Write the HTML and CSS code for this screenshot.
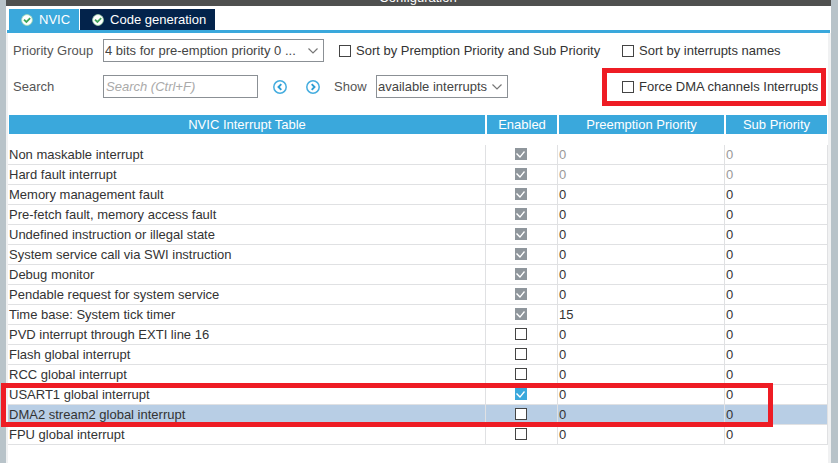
FILE: index.html
```
<!DOCTYPE html>
<html lang="en">
<head>
<meta charset="utf-8">
<title>NVIC Configuration</title>
<link rel="stylesheet" href="styles.css">
</head>
<body>
<main class="window">
  <header class="titlebar"><h1 class="title">Configuration</h1></header>
  <nav class="tabs">
    <button class="tab active" type="button">
      <svg class="ok" viewBox="0 0 12 12" aria-hidden="true"><circle cx="6" cy="6" r="5.4" fill="#fff" stroke="#a5dbb0" stroke-width=".8"/><path d="M3 5.6 5.4 8 9.2 4.2" fill="none" stroke="#3fa65a" stroke-width="1.8"/></svg>
      NVIC</button>
    <button class="tab" type="button">
      <svg class="ok" viewBox="0 0 12 12" aria-hidden="true"><circle cx="6" cy="6" r="5.4" fill="#fff" stroke="#a5dbb0" stroke-width=".8"/><path d="M3 5.6 5.4 8 9.2 4.2" fill="none" stroke="#3fa65a" stroke-width="1.8"/></svg>
      Code generation</button>
  </nav>
  <form class="options">
    <label class="caption" for="group">Priority Group</label>
    <div class="controls">
      <span class="combo combo-wide">
        <select id="group"><option>4 bits for pre-emption priority 0 ...</option></select>
        <svg class="chevron" viewBox="0 0 10 6" aria-hidden="true"><path d="M.5.5 5 5 9.5.5" fill="none" stroke="#777" stroke-width="1.2"/></svg>
      </span>
      <label class="check"><input type="checkbox">Sort by Premption Priority and Sub Priority</label>
    </div>
    <label class="check"><input type="checkbox">Sort by interrupts names</label>

    <label class="caption" for="search">Search</label>
    <div class="controls">
      <input class="search" id="search" type="text" placeholder="Search (Ctrl+F)">
      <span class="steps">
        <button class="step" type="button" aria-label="Previous"><svg viewBox="0 0 14 14"><circle cx="7" cy="7" r="6.2" fill="none" stroke="#45addf" stroke-width="1.5"/><path d="M8.3 4.2 5.5 7 8.3 9.8" fill="none" stroke="#2c9dd4" stroke-width="1.9"/></svg></button>
        <button class="step" type="button" aria-label="Next"><svg viewBox="0 0 14 14"><circle cx="7" cy="7" r="6.2" fill="none" stroke="#45addf" stroke-width="1.5"/><path d="M5.7 4.2 8.5 7 5.7 9.8" fill="none" stroke="#2c9dd4" stroke-width="1.9"/></svg></button>
      </span>
      <label class="caption show" for="show">Show</label>
      <span class="combo combo-narrow">
        <select id="show"><option>available interrupts</option></select>
        <svg class="chevron" viewBox="0 0 10 6" aria-hidden="true"><path d="M.5.5 5 5 9.5.5" fill="none" stroke="#777" stroke-width="1.2"/></svg>
      </span>
    </div>
    <label class="check marked"><input type="checkbox">Force DMA channels Interrupts</label>
  </form>
  <section class="listing">
    <table>
      <colgroup><col><col class="col-enabled"><col class="col-preempt"><col class="col-sub"></colgroup>
      <thead><tr><th>NVIC Interrupt Table</th><th>Enabled</th><th>Preemption Priority</th><th>Sub Priority</th></tr></thead>
      <tbody>
        <tr class="fixed"><td>Non maskable interrupt</td><td><input type="checkbox" aria-label="Non maskable interrupt" checked disabled></td><td>0</td><td>0</td></tr>
        <tr class="fixed"><td>Hard fault interrupt</td><td><input type="checkbox" aria-label="Hard fault interrupt" checked disabled></td><td>0</td><td>0</td></tr>
        <tr><td>Memory management fault</td><td><input type="checkbox" aria-label="Memory management fault" checked disabled></td><td>0</td><td>0</td></tr>
        <tr><td>Pre-fetch fault, memory access fault</td><td><input type="checkbox" aria-label="Pre-fetch fault, memory access fault" checked disabled></td><td>0</td><td>0</td></tr>
        <tr><td>Undefined instruction or illegal state</td><td><input type="checkbox" aria-label="Undefined instruction or illegal state" checked disabled></td><td>0</td><td>0</td></tr>
        <tr><td>System service call via SWI instruction</td><td><input type="checkbox" aria-label="System service call via SWI instruction" checked disabled></td><td>0</td><td>0</td></tr>
        <tr><td>Debug monitor</td><td><input type="checkbox" aria-label="Debug monitor" checked disabled></td><td>0</td><td>0</td></tr>
        <tr><td>Pendable request for system service</td><td><input type="checkbox" aria-label="Pendable request for system service" checked disabled></td><td>0</td><td>0</td></tr>
        <tr><td>Time base: System tick timer</td><td><input type="checkbox" aria-label="Time base: System tick timer" checked disabled></td><td>15</td><td>0</td></tr>
        <tr><td>PVD interrupt through EXTI line 16</td><td><input type="checkbox" aria-label="PVD interrupt through EXTI line 16"></td><td>0</td><td>0</td></tr>
        <tr><td>Flash global interrupt</td><td><input type="checkbox" aria-label="Flash global interrupt"></td><td>0</td><td>0</td></tr>
        <tr><td>RCC global interrupt</td><td><input type="checkbox" aria-label="RCC global interrupt"></td><td>0</td><td>0</td></tr>
        <tr><td>USART1 global interrupt</td><td><input type="checkbox" aria-label="USART1 global interrupt" checked></td><td>0</td><td>0</td></tr>
        <tr class="selected"><td>DMA2 stream2 global interrupt</td><td><input type="checkbox" aria-label="DMA2 stream2 global interrupt"></td><td>0</td><td>0</td></tr>
        <tr><td>FPU global interrupt</td><td><input type="checkbox" aria-label="FPU global interrupt"></td><td>0</td><td>0</td></tr>
      </tbody>
    </table>
    <div class="row-mark"></div>
  </section>
</main>
</body>
</html>
```
FILE: styles.css
```
* { box-sizing: border-box; }

body {
  margin: 0;
  background: #b8c3c9;
  color: #333;
  font: 13px/20px "Liberation Sans", Arial, sans-serif;
}

button, input, select { font: inherit; color: inherit; margin: 0; }

.window {
  min-height: 100vh;
  margin: 0 7px 0 6px;
  padding: 0 3px 0 2px;
  background: linear-gradient(#4f504f 6px, #fff 6px, #fff 33px, #f0f1f2 33px);
}

.titlebar {
  height: 6px;
  display: flex;
  align-items: flex-end;
  justify-content: center;
  overflow: hidden;
}
.title { margin: 0; font-size: 13px; font-weight: normal; line-height: 16px; color: #fff; }

.tabs {
  display: flex;
  gap: 1px;
  margin: 0 -2px 0 -1px;
  padding: 3px 0 0 2px;
  border-bottom: 3px solid #3aa8dc;
}
.tab {
  display: flex;
  align-items: center;
  gap: 6px;
  height: 21px;
  padding: 0 9px 0 12px;
  border: 0;
  background: #03234b;
  color: #fff;
}
.tab.active { background: #3aa8dc; }
.ok { width: 12px; height: 12px; }

.options {
  display: grid;
  grid-template-columns: 90px 519px 1fr;
  row-gap: 13px;
  align-items: center;
  padding: 6px 0 17px 5px;
  background: #fff;
}
.caption { color: #555; }
.controls { display: flex; align-items: center; }

.combo { position: relative; display: inline-flex; height: 23px; }
.combo-wide { width: 221px; margin-right: 15px; }
.combo-narrow { width: 132px; }
.combo select, .search {
  appearance: none;
  width: 100%;
  height: 23px;
  padding: 0 1px;
  border: 1px solid #8b9095;
  border-radius: 0;
  background: #fff;
  color: #444;
}
.chevron { position: absolute; right: 6px; top: 9px; width: 10px; height: 6px; pointer-events: none; }

.search { width: 155px; padding: 0 2px; }
.search::placeholder { color: #aaa; font-style: italic; opacity: 1; }
.steps { display: flex; gap: 19px; margin: 0 14px 0 15px; }
.step { width: 14px; height: 14px; padding: 0; border: 0; background: none; }
.step svg { display: block; }
.show { width: 42px; }

.check { display: flex; align-items: center; gap: 5px; position: relative; white-space: nowrap; }
.marked::after {
  content: "";
  position: absolute;
  inset: -9px 2px -9px -20px;
  border: 5px solid #ee1c24;
}

input[type="checkbox"] {
  appearance: none;
  display: block;
  flex: none;
  width: 12px;
  height: 12px;
  border: 1px solid #444;
  background: #fff;
}
input[type="checkbox"]:checked { border: 0; background: #3aa8dc; }
input[type="checkbox"]:checked:disabled { background: #8f969c; }
input[type="checkbox"]:checked::before {
  content: "";
  display: block;
  width: 12px;
  height: 12px;
  background: #fff;
  clip-path: polygon(1px 6px, 2px 5px, 5px 8px, 9px 3px, 10px 4px, 5px 10px);
}

.listing { position: relative; background: #fff; min-height: calc(100vh - 115px); }
table { width: 100%; border-spacing: 0; table-layout: fixed; }
.col-enabled { width: 72px; }
.col-preempt { width: 167px; }
.col-sub { width: 103px; }
th {
  height: 30px;
  padding: 0;
  border: solid transparent;
  border-width: 0 1px 11px;
  background: #3aa8dc padding-box;
  color: #fff;
  font-weight: normal;
  line-height: 19px;
}
td {
  height: 20px;
  padding: 0 1px;
  border: solid #e0e1e3;
  border-width: 0 1px 1px 0;
  line-height: 19px;
}
td:nth-child(2) { padding: 0 2px 1px 1px; }
td input[type="checkbox"] { margin: 0 auto; }
.fixed td:nth-child(n+3) { color: #999; }
.selected td { background: #b8cee5; }

.row-mark {
  position: absolute;
  top: 268px;
  left: -7px;
  right: 55px;
  height: 44px;
  border: 5px solid #ee1c24;
}
```
